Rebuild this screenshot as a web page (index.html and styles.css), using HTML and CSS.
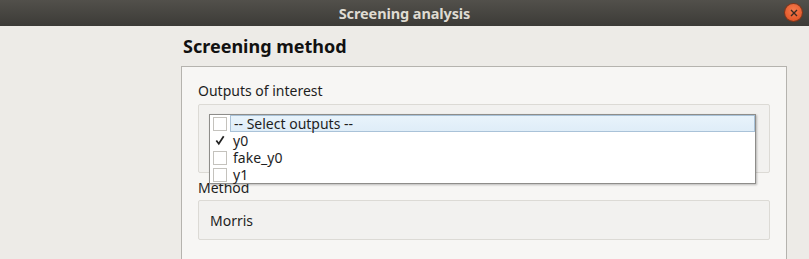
FILE: index.html
```html
<!DOCTYPE html>
<html lang="en">

<head>
    <meta charset="UTF-8">
    <title>Screening analysis</title>
    <link rel="stylesheet" href="styles.css">
</head>

<body>
    <div class="titlebar">
        <span class="title">Screening analysis</span>
        <span class="close">
            <svg width="8" height="8" viewBox="0 0 8 8">
                <path d="M1 1 L7 7 M7 1 L1 7" stroke="#3a2a22" stroke-width="1.4" />
            </svg>
        </span>
    </div>
    <div class="main">
        <div class="sidebar"></div>
        <div class="panel">
            <h2>Screening method</h2>
            <div class="group">
                <div class="label">Outputs of interest</div>
                <div class="frame">
                    <ul class="popup">
                        <li class="row current"><span class="box"></span><span class="text">-- Select outputs --</span></li>
                        <li class="row"><span class="box checked">
                                <svg width="13" height="13" viewBox="0 0 13 13">
                                    <path d="M2.5 6.5 L5.2 10 L10.5 2" fill="none" stroke="#222" stroke-width="1.9" />
                                </svg>
                            </span><span class="text">y0</span></li>
                        <li class="row"><span class="box"></span><span class="text">fake_y0</span></li>
                        <li class="row"><span class="box"></span><span class="text">y1</span></li>
                    </ul>
                </div>
                <div class="label method-label">Method</div>
                <div class="field">Morris</div>
            </div>
        </div>
    </div>
</body>

</html>
```

FILE: styles.css
```css
/* Reset */
* {
    margin: 0;
    padding: 0;
    box-sizing: border-box;
}

body {
    font-family: "Noto Sans", "DejaVu Sans", sans-serif;
    font-size: 14px;
    color: #1e1e1e;
    background: #edebe7;
    width: 809px;
    height: 259px;
    overflow: hidden;
}

/* Window title bar */
.titlebar {
    height: 26px;
    background: linear-gradient(to bottom, #52504b, #3c3b37);
    display: flex;
    align-items: center;
    justify-content: center;
    position: relative;
}

.title {
    color: #dfdbd2;
    font-weight: bold;
    font-size: 14.5px;
    letter-spacing: -0.1px;
}

.close {
    position: absolute;
    right: 7px;
    top: 4px;
    width: 17px;
    height: 17px;
    border-radius: 50%;
    background: radial-gradient(circle at 50% 35%, #f57a4c, #de4d1e);
    box-shadow: 0 0 0 1px #8a3416;
    display: flex;
    align-items: center;
    justify-content: center;
}

/* Content */
.main {
    display: flex;
    height: 233px;
}

.sidebar {
    width: 181px;
}

.panel {
    flex: 1;
    margin-right: 22px;
    display: flex;
    flex-direction: column;
}

h2 {
    font-size: 18px;
    font-weight: bold;
    color: #111;
    padding: 9px 0 0 2px;
    height: 40px;
    line-height: 22px;
}

.group {
    flex: 1;
    background: #f7f6f4;
    border: 1px solid #b5b3ae;
    border-bottom: none;
    padding: 15px 16px 0 16px;
}

.label {
    line-height: 17px;
    height: 17px;
}

.frame {
    position: relative;
    margin-top: 5px;
    height: 69px;
    background: #f2f1ef;
    border: 1px solid #dcdad5;
    border-radius: 2px;
}

/* Drop-down list over the combo frame */
.popup {
    list-style: none;
    position: absolute;
    left: 10px;
    top: 9px;
    width: 547px;
    height: 70px;
    background: #fff;
    border: 1px solid #8e8d8a;
    box-shadow: 1px 1px 2px rgba(0, 0, 0, 0.25);
}

.row {
    display: flex;
    align-items: center;
    height: 17px;
    line-height: 17px;
}

.box {
    width: 14px;
    height: 14px;
    margin: 0 3px 0 3px;
    border: 1px solid #c4c2bd;
    background: #fff;
    display: flex;
    align-items: center;
    justify-content: center;
}

.box.checked {
    border-color: transparent;
}

.text {
    flex: 1;
    padding-left: 3px;
    height: 17px;
}

.current .text {
    background: linear-gradient(to bottom, #e8f3fb, #dfedf8);
    border: 1px solid #a9c2d8;
    line-height: 15px;
}

.method-label {
    margin-top: 6px;
}

.field {
    margin-top: 4px;
    height: 40px;
    background: #f2f1ef;
    border: 1px solid #dcdad5;
    border-radius: 2px;
    padding-left: 11px;
    display: flex;
    align-items: center;
}
```
